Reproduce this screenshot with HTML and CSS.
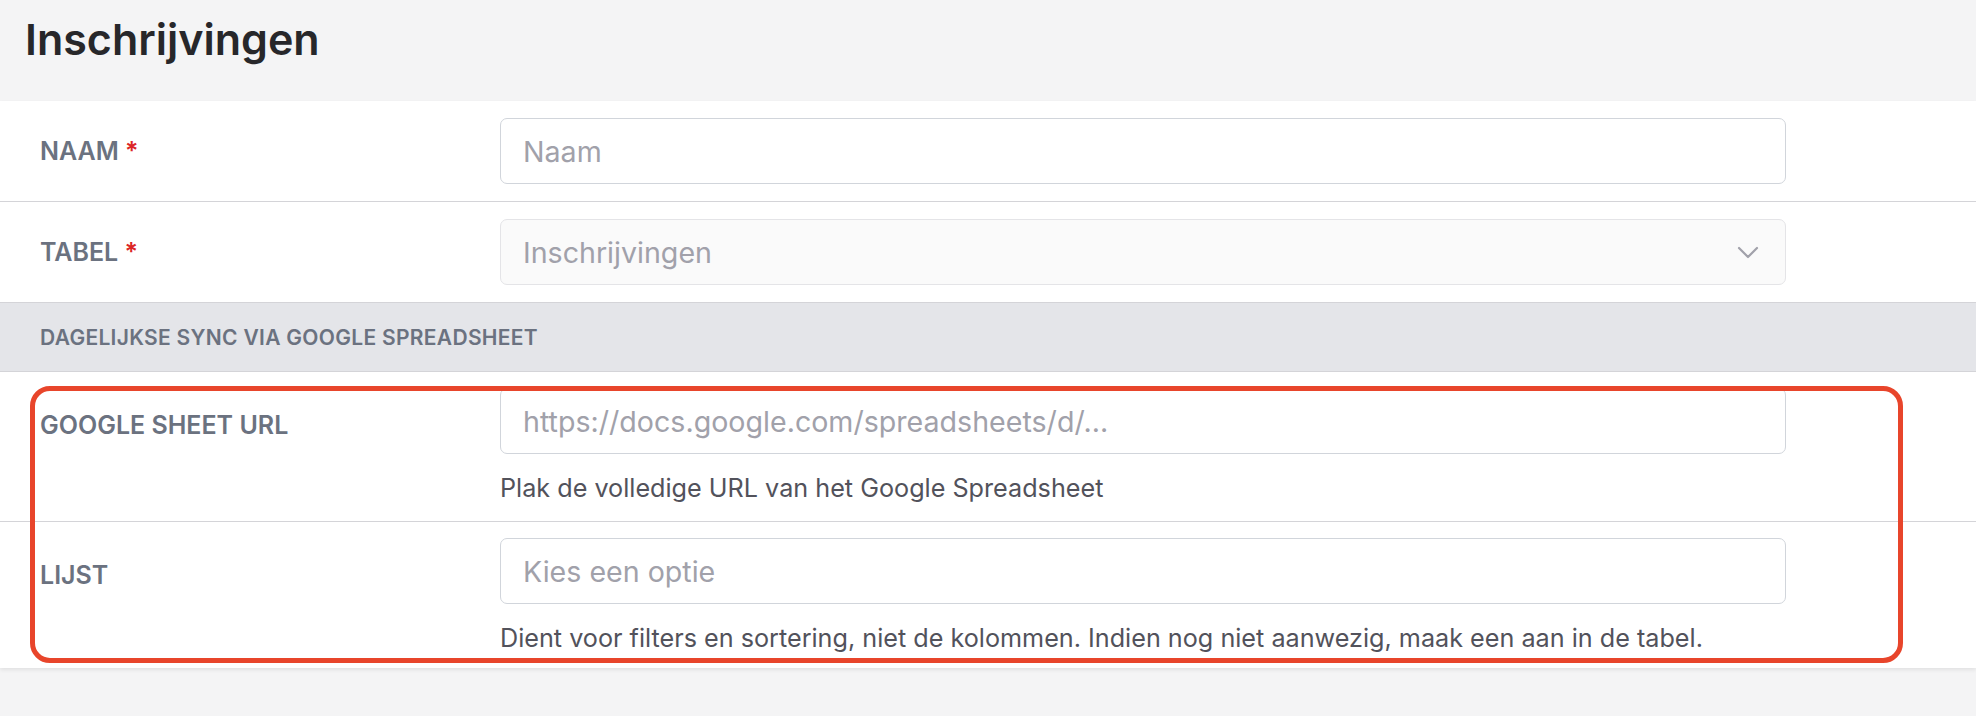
FILE: index.html
```html
<html>
<head>
<link rel="stylesheet" href="styles.css">
</head>
<body>
<div class="page">
    <h1 class="page-title">Inschrijvingen</h1>

    <div class="card">
        <div class="field-row">
            <label class="field-label">NAAM <span class="req">*</span></label>
            <div class="field-body">
                <div class="input"><span class="placeholder">Naam</span></div>
            </div>
        </div>

        <div class="field-row">
            <label class="field-label">TABEL <span class="req">*</span></label>
            <div class="field-body">
                <div class="input select disabled">
                    <span class="placeholder">Inschrijvingen</span>
                    <svg class="chevron" width="22" height="13" viewBox="0 0 22 13">
                        <path d="M2 2 L11 11 L20 2" fill="none" stroke="#a1a1aa" stroke-width="2.2" stroke-linecap="round" stroke-linejoin="round"/>
                    </svg>
                </div>
            </div>
        </div>

        <div class="section-head">DAGELIJKSE SYNC VIA GOOGLE SPREADSHEET</div>

        <div class="field-row top">
            <label class="field-label">GOOGLE SHEET URL</label>
            <div class="field-body">
                <div class="input"><span class="placeholder">https://docs.google.com/spreadsheets/d/...</span></div>
                <p class="help">Plak de volledige URL van het Google Spreadsheet</p>
            </div>
        </div>

        <div class="field-row top last">
            <label class="field-label">LIJST</label>
            <div class="field-body">
                <div class="input"><span class="placeholder">Kies een optie</span></div>
                <p class="help">Dient voor filters en sortering, niet de kolommen. Indien nog niet aanwezig, maak een aan in de tabel.</p>
            </div>
        </div>

        <!-- annotation drawn over the last two rows -->
        <div class="highlight"></div>
    </div>
</div>
</body>
</html>
```

FILE: styles.css
```css
body {
  margin: 0;
  background-color: #f4f4f5;
  font-family: Inter, "Noto Sans", "Liberation Sans", sans-serif;
}

.page {
  height: 716px;
}

.page-title {
  margin: 0;
  padding: 14px 25px 37px 25px;
  font-size: 43px;
  line-height: 50px;
  font-weight: 600;
  color: #27272a;
}

/* white form card */
.card {
  position: relative;
  background-color: #fff;
  box-shadow: 0 2px 4px rgba(0, 0, 0, 0.08);
}

.field-row {
  display: grid;
  grid-template-columns: 500px 1286px;
  align-items: center;
  padding: 17px 0 17px 0;
  border-bottom: 1px solid #d4d4d8;
}

.field-row.top {
  align-items: start;
  padding: 16px 0 17px 0;
}

.field-row.last {
  border-bottom: none;
  padding-bottom: 14px;
}

.field-label {
  padding-left: 40px;
  font-size: 25px;
  line-height: 30px;
  font-weight: 600;
  color: #6b7280;
}

.field-row.top .field-label {
  padding-top: 22px;
}

.req {
  color: #dc2626;
}

.input {
  display: flex;
  align-items: center;
  box-sizing: border-box;
  height: 66px;
  padding: 0 22px;
  border: 1px solid #d1d5db;
  border-radius: 7px;
  background-color: #fff;
}

.input.disabled {
  background-color: #fafafa;
  border-color: #e4e4e7;
}

.select {
  justify-content: space-between;
  padding-right: 26px;
}

.placeholder {
  font-size: 28.6px;
  color: #a1a1aa;
}

.help {
  margin: 18px 0 0 0;
  font-size: 25.2px;
  line-height: 32px;
  color: #52525b;
}

.section-head {
  height: 69px;
  box-sizing: border-box;
  padding-left: 40px;
  display: flex;
  align-items: center;
  background-color: #e4e5e9;
  border-bottom: 1px solid #d4d4d8;
  font-size: 21px;
  font-weight: 600;
  letter-spacing: 0.3px;
  color: #6b7280;
}

.highlight {
  position: absolute;
  left: 30px;
  top: 285px;
  width: 1873px;
  height: 277px;
  box-sizing: border-box;
  border: 5px solid #e8452b;
  border-radius: 20px;
  pointer-events: none;
}
```
